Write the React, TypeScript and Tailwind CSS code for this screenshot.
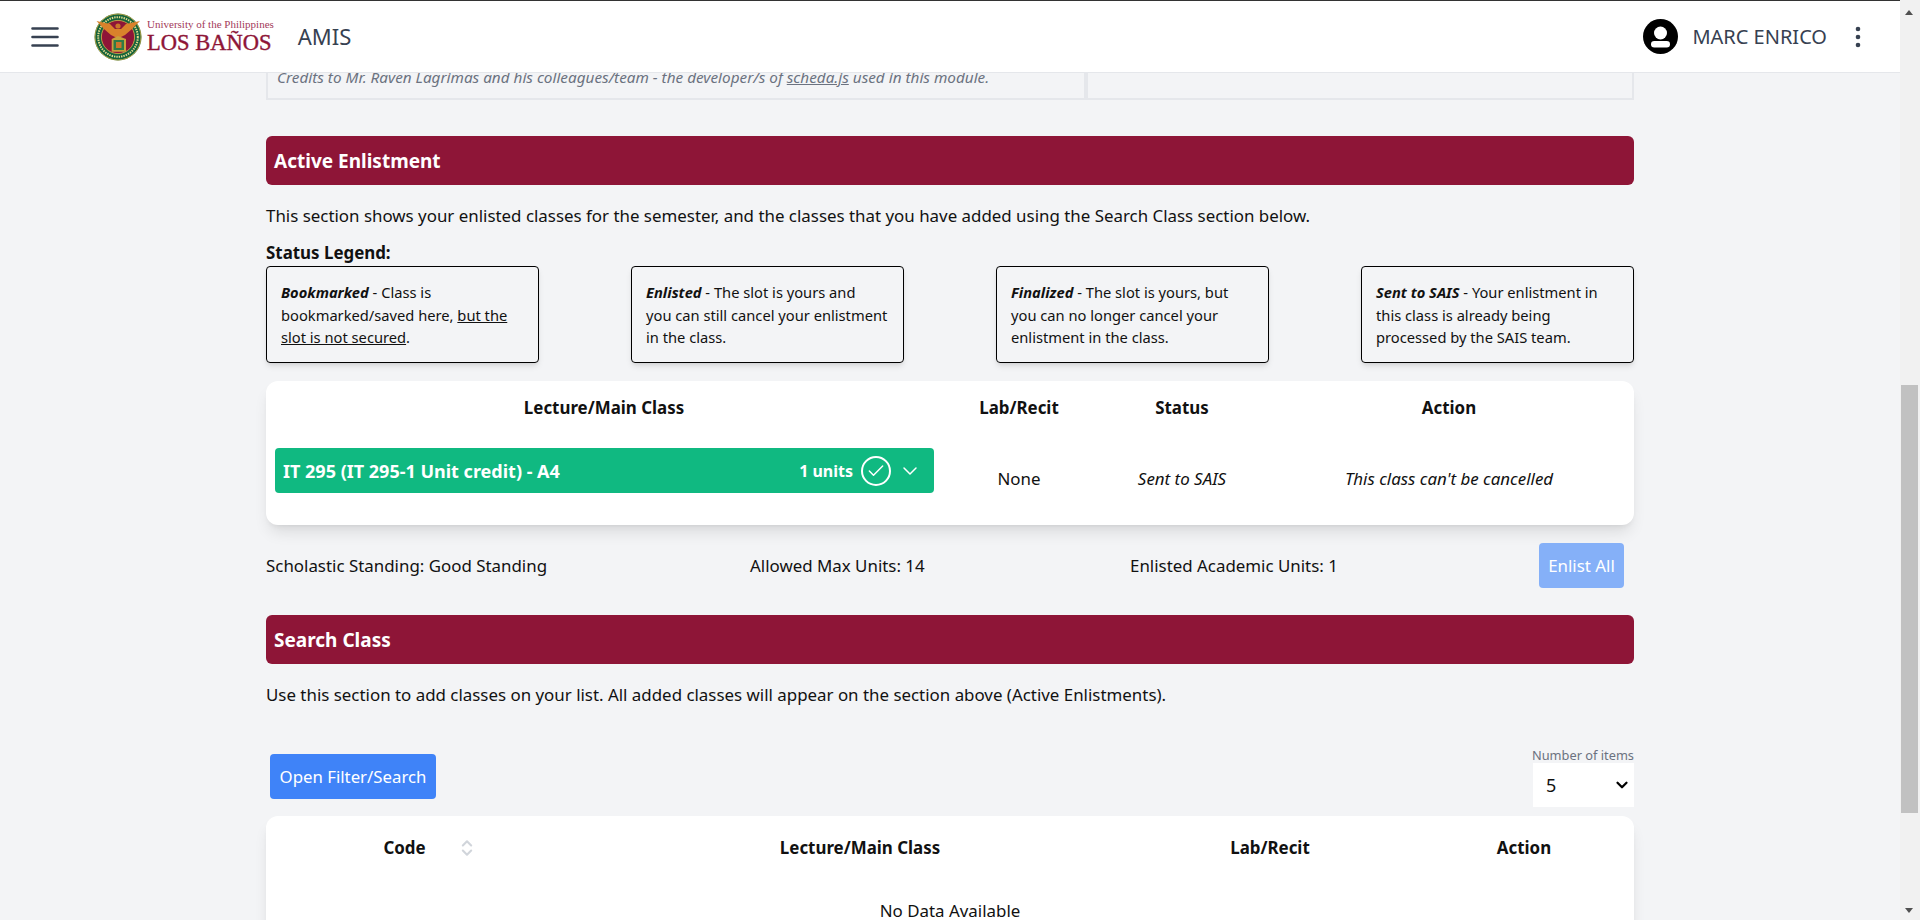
import { Check, ChevronDown, ChevronsUpDown } from "lucide-react";

const font = "font-['Noto_Sans','Open_Sans',sans-serif]";

function Seal() {
  return (
    <svg viewBox="0 0 48 48" className="h-[48px] w-[48px] shrink-0">
      <circle cx="24" cy="24" r="23.5" fill="#14633c" />
      <circle cx="24" cy="24" r="23" fill="none" stroke="#d8b24a" strokeWidth="0.8" />
      <circle cx="24" cy="24" r="19.8" fill="none" stroke="#e3d98c" strokeWidth="2" strokeDasharray="1.4 1" />
      <circle cx="24" cy="24" r="16.6" fill="#8e1537" stroke="#d8b24a" strokeWidth="0.8" />
      <path d="M2.5 8 L16 11 L21 16 L27 16 L32 11 L46 8 L38 16 L31 22 L27 24 H21 L17 22 L10 16 Z" fill="#d9822b" />
      <circle cx="24" cy="13" r="2.6" fill="#c9762a" />
      <path d="M17.7 26 L24 23 L32 26 V38.7 H17.7 Z" fill="#c9a13c" />
      <path d="M19.5 27 H30 V37 H19.5 Z" fill="#2f7a46" />
      <path d="M22 29 H27.5 V35 H22 Z" fill="#c9762a" />
    </svg>
  );
}

function SectionBar({ title }: { title: string }) {
  return (
    <div className="flex h-[49px] shrink-0 items-center rounded-md bg-[#8e1537] px-2 text-[19px] leading-7 font-bold text-white">
      {title}
    </div>
  );
}

function LegendBox({ children }: { children: React.ReactNode }) {
  return (
    <div className="h-[97px] w-[273px] rounded-sm border border-black py-[14px] pl-[14px] text-[14.7px] leading-[22.5px] whitespace-nowrap text-[#111111] shadow-md">
      {children}
    </div>
  );
}

export default function App() {
  return (
    <div className={`${font} flex h-[920px] w-full overflow-hidden bg-[#f3f4f6] text-[16.9px] text-[#111111]`}>
      <div className="relative min-w-0 flex-1">
        <header className="absolute inset-x-0 top-0 z-10 flex h-[73px] items-center justify-between border-t border-b border-t-[#333333] border-b-[#e5e7eb] bg-white pr-[30px] pl-[31px]">
          <div className="flex items-center">
            <svg viewBox="0 0 28 22" className="h-[22px] w-[28px] text-[#374151]" fill="none" stroke="currentColor" strokeWidth="2.6" strokeLinecap="round">
              <path d="M1.5 2.5h25M1.5 11h25M1.5 19.5h25" />
            </svg>
            <div className="ml-[35px] flex items-center">
              <Seal />
              <div className="ml-[5px] font-['Liberation_Serif',serif] text-[#8e1537]">
                <div className="text-[11px] leading-[13px] whitespace-nowrap text-[#a33a5a]">University of the Philippines</div>
                <div className="text-[22.5px] leading-[24px] [-webkit-text-stroke:0.4px_#8e1537]">LOS BAÑOS</div>
              </div>
            </div>
            <span className="ml-6 text-[22px] text-[#374151]">AMIS</span>
          </div>
          <div className="flex items-center text-[#374151]">
            <svg viewBox="0 0 35 35" className="h-[35px] w-[35px]">
              <circle cx="17.5" cy="17.5" r="17.5" fill="#000" />
              <circle cx="17.5" cy="14" r="6.5" fill="#fff" />
              <rect x="8" y="22" width="19" height="6.6" rx="3.3" fill="#fff" />
            </svg>
            <span className="ml-[14px] text-[20px]">MARC ENRICO</span>
            <svg viewBox="0 0 24 24" className="ml-[19px] h-6 w-6" fill="currentColor">
              <circle cx="12" cy="4" r="2.3" />
              <circle cx="12" cy="12" r="2.3" />
              <circle cx="12" cy="20" r="2.3" />
            </svg>
          </div>
        </header>

        <main className="mx-auto flex h-full w-[1368px] flex-col pt-[48px]">
          <div className="grid h-[52px] shrink-0 grid-cols-[820px_548px]">
            <div className="flex items-end border-2 border-[#e5e7eb] px-[9px] pb-[10px] text-[15.3px] leading-[21px] text-[#6b7280] italic">
              <span>
                Credits to Mr. Raven Lagrimas and his colleagues/team - the developer/s of <span className="underline">scheda.js</span> used in this module.
              </span>
            </div>
            <div className="border-2 border-[#e5e7eb]" />
          </div>

          <div className="mt-[36px]">
            <SectionBar title="Active Enlistment" />
          </div>
          <p className="mt-[19px] leading-6">
            This section shows your enlisted classes for the semester, and the classes that you have added using the Search Class section below.
          </p>
          <p className="mt-[13px] leading-6 font-bold">Status Legend:</p>
          <div className="mt-px flex justify-between">
            <LegendBox>
              <b className="italic">Bookmarked</b> - Class is
              <br />
              bookmarked/saved here, <span className="underline">but the
              <br />
              slot is not secured</span>.
            </LegendBox>
            <LegendBox>
              <b className="italic">Enlisted</b> - The slot is yours and
              <br />
              you can still cancel your enlistment
              <br />
              in the class.
            </LegendBox>
            <LegendBox>
              <b className="italic">Finalized</b> - The slot is yours, but
              <br />
              you can no longer cancel your
              <br />
              enlistment in the class.
            </LegendBox>
            <LegendBox>
              <b className="italic">Sent to SAIS</b> - Your enlistment in
              <br />
              this class is already being
              <br />
              processed by the SAIS team.
            </LegendBox>
          </div>

          <div className="mt-[18px] h-[144px] shrink-0 rounded-xl bg-white shadow-lg">
            <div className="grid h-[53px] grid-cols-[676px_154px_172px_366px] items-center text-center font-bold">
              <span>Lecture/Main Class</span>
              <span>Lab/Recit</span>
              <span>Status</span>
              <span className="pr-[4px]">Action</span>
            </div>
            <div className="grid grid-cols-[676px_154px_172px_366px] items-start pt-[14px] text-center">
              <div className="ml-[9px] flex h-[45px] w-[659px] items-center justify-between rounded bg-[#10b981] pr-[12px] pl-2 text-lg font-bold text-white">
                <span>IT 295 (IT 295-1 Unit credit) - A4</span>
                <span className="flex items-center text-base">
                  1 units
                  <span className="ml-2 flex h-[30px] w-[30px] items-center justify-center rounded-full border-2 border-white">
                    <Check className="h-5 w-5" strokeWidth={1.75} />
                  </span>
                  <ChevronDown className="ml-[7px] h-6 w-6" strokeWidth={1.5} />
                </span>
              </div>
              <span className="mt-[18px]">None</span>
              <span className="mt-[18px] italic">Sent to SAIS</span>
              <span className="mt-[18px] pr-[4px] italic">This class can't be cancelled</span>
            </div>
          </div>

          <div className="mt-[18px] flex h-[45px] shrink-0 items-center pr-[10px]">
            <span className="w-[484px]">Scholastic Standing: Good Standing</span>
            <span className="w-[380px]">Allowed Max Units: 14</span>
            <span className="w-[409px]">Enlisted Academic Units: 1</span>
            <button className="h-[45px] w-[85px] rounded bg-[#85b0f8] text-white">Enlist All</button>
          </div>

          <div className="mt-[27px]">
            <SectionBar title="Search Class" />
          </div>
          <p className="mt-[19px] leading-6">
            Use this section to add classes on your list. All added classes will appear on the section above (Active Enlistments).
          </p>

          <div className="mt-[40px] flex items-start justify-between">
            <button className="mt-[7px] ml-[4px] h-[45px] w-[166px] rounded bg-[#3f83f8] text-[16.8px] text-white">Open Filter/Search</button>
            <div className="flex flex-col items-end">
              <span className="text-[12.8px] leading-4 whitespace-nowrap text-[#6b7280]">Number of items</span>
              <div className="flex h-[44px] w-[101px] items-center justify-between bg-white pr-[3px] pl-[13px] text-lg">
                <span>5</span>
                <ChevronDown className="h-[18px] w-[18px] text-black" strokeWidth={3} />
              </div>
            </div>
          </div>

          <div className="mt-[9px] h-[200px] shrink-0 rounded-xl bg-white shadow-lg">
            <div className="grid h-[64px] grid-cols-[328px_532px_288px_220px] items-center text-center font-bold">
              <span className="flex items-center justify-center">
                Code
                <ChevronsUpDown className="ml-[31px] h-5 w-5 text-[#d1d5db]" strokeWidth={2.5} />
              </span>
              <span>Lecture/Main Class</span>
              <span>Lab/Recit</span>
              <span>Action</span>
            </div>
            <p className="pt-[18px] text-center">No Data Available</p>
          </div>
        </main>
      </div>

      <div className="flex w-[20px] shrink-0 flex-col bg-[#f1f1f1] pl-px">
        <div className="mt-[10px] ml-[4px] h-0 w-0 border-x-[4.5px] border-b-[5px] border-x-transparent border-b-[#505050]" />
        <div className="mt-[370px] h-[428px] w-[17px] bg-[#c1c1c1]" />
        <div className="mt-auto mb-[7px] ml-[4px] h-0 w-0 border-x-[4.5px] border-t-[5px] border-x-transparent border-t-[#505050]" />
      </div>
    </div>
  );
}
